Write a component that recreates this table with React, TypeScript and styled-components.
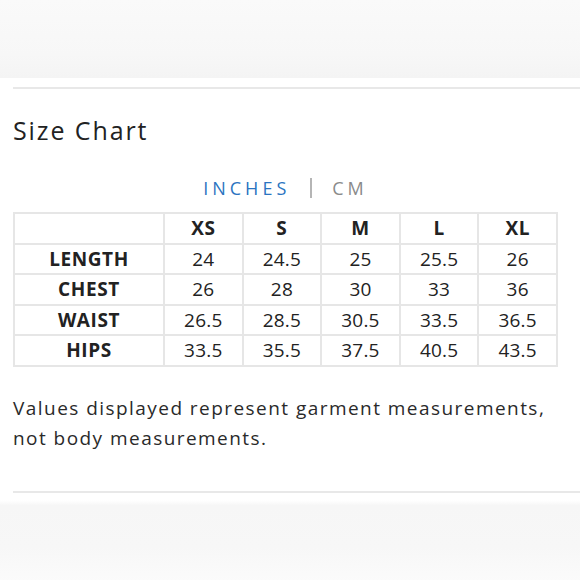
import React from 'react'
import styled, { createGlobalStyle } from 'styled-components'

const GlobalStyle = createGlobalStyle`
  body {
    margin: 0;
    background: #fff;
    font-family: "Open Sans", "Noto Sans", sans-serif;
    color: #222;
  }
`

const Page = styled.div`
  width: 580px;
  height: 580px;
  overflow: hidden;
  display: flex;
  flex-direction: column;
`

const Band = styled.div<{ $flip?: boolean }>`
  height: ${(p) => (p.$flip ? '90px' : '78px')};
  flex-shrink: 0;
  background: ${(p) =>
    p.$flip
      ? 'linear-gradient(180deg, #fff 0%, #fff 8%, #f6f6f6 14%, #f7f7f7 60%, #fbfbfb 100%)'
      : 'linear-gradient(180deg, #fafafa 0%, #f7f7f7 70%, #f4f4f4 100%)'};
`

const Section = styled.section`
  margin: 9px 0 0 13px;
  border-top: 2px solid #e8e8e8;
  border-bottom: 2px solid #e8e8e8;
  padding: 24px 0 38px;
`

const Title = styled.h2`
  margin: 0;
  font-size: 25px;
  font-weight: 400;
  letter-spacing: 1.9px;
  color: #222;
  line-height: 34px;
`

const Chart = styled.div`
  width: 545px;
  margin-top: 28px;
`

const Units = styled.div`
  display: flex;
  justify-content: center;
  align-items: center;
  gap: 20px;
  height: 26px;
  font-size: 18px;
  letter-spacing: 4px;
`

const Unit = styled.span<{ $active?: boolean }>`
  color: ${(p) => (p.$active ? '#2b74c1' : '#8a8a8a')};
`

const Divider = styled.span`
  width: 2px;
  height: 20px;
  background: #b5b5b5;
`

const Table = styled.table`
  width: 545px;
  margin-top: 11px;
  border-collapse: collapse;
  table-layout: fixed;
  border: 2px solid #e6e6e6;
`

const Cell = styled.td<{ $head?: boolean }>`
  border: 2px solid #e6e6e6;
  height: 28.5px;
  padding: 0;
  text-align: center;
  font-size: 19px;
  font-weight: ${(p) => (p.$head ? 700 : 400)};
  letter-spacing: ${(p) => (p.$head ? '0.6px' : '0.2px')};
  color: #222;
`

const Note = styled.p`
  margin: 26px 0 0;
  font-size: 19px;
  line-height: 30px;
  letter-spacing: 1.45px;
  color: #2a2a2a;
`

const sizes = ['XS', 'S', 'M', 'L', 'XL']
const rows: [string, string[]][] = [
  ['LENGTH', ['24', '24.5', '25', '25.5', '26']],
  ['CHEST', ['26', '28', '30', '33', '36']],
  ['WAIST', ['26.5', '28.5', '30.5', '33.5', '36.5']],
  ['HIPS', ['33.5', '35.5', '37.5', '40.5', '43.5']],
]

export default function App() {
  return (
    <Page>
      <GlobalStyle />
      <Band />
      <Section>
        <Title>Size Chart</Title>
        <Chart>
          <Units>
            <Unit $active>INCHES</Unit>
            <Divider />
            <Unit>CM</Unit>
          </Units>
          <Table>
            <colgroup>
              <col style={{ width: 150 }} />
              {sizes.map((s) => (
                <col key={s} />
              ))}
            </colgroup>
            <tbody>
              <tr>
                <Cell />
                {sizes.map((s) => (
                  <Cell key={s} $head>
                    {s}
                  </Cell>
                ))}
              </tr>
              {rows.map(([label, vals]) => (
                <tr key={label}>
                  <Cell $head>{label}</Cell>
                  {vals.map((v, i) => (
                    <Cell key={i}>{v}</Cell>
                  ))}
                </tr>
              ))}
            </tbody>
          </Table>
        </Chart>
        <Note>
          Values displayed represent garment measurements,
          <br />
          not body measurements.
        </Note>
      </Section>
      <Band $flip />
    </Page>
  )
}
